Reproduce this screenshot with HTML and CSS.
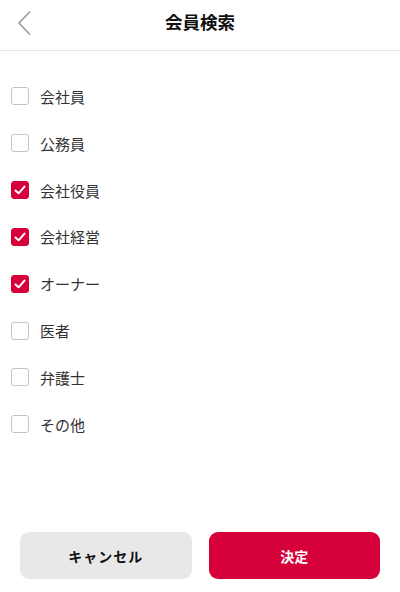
FILE: index.html
```html
<!DOCTYPE html>
<html lang="ja">
<head>
<meta charset="utf-8">
<link rel="stylesheet" href="styles.css">
</head>
<body>
<div class="page">
  <header class="header">
    <span class="back">
      <svg width="16" height="26" viewBox="0 0 16 26"><path d="M14 1.5 L3 13 L14 24.5" fill="none" stroke="#9a9a9a" stroke-width="1.6"/></svg>
    </span>
    <h1 class="title">会員検索</h1>
  </header>
  <ul class="list">
    <li class="item"><span class="box"></span><span class="label">会社員</span></li>
    <li class="item"><span class="box"></span><span class="label">公務員</span></li>
    <li class="item"><span class="box checked"><svg width="18" height="18" viewBox="0 0 18 18"><path d="M4.5 9.5 L7.6 12.3 L13.5 5.6" fill="none" stroke="#fff" stroke-width="2" stroke-linecap="round" stroke-linejoin="round"/></svg></span><span class="label">会社役員</span></li>
    <li class="item"><span class="box checked"><svg width="18" height="18" viewBox="0 0 18 18"><path d="M4.5 9.5 L7.6 12.3 L13.5 5.6" fill="none" stroke="#fff" stroke-width="2" stroke-linecap="round" stroke-linejoin="round"/></svg></span><span class="label">会社経営</span></li>
    <li class="item"><span class="box checked"><svg width="18" height="18" viewBox="0 0 18 18"><path d="M4.5 9.5 L7.6 12.3 L13.5 5.6" fill="none" stroke="#fff" stroke-width="2" stroke-linecap="round" stroke-linejoin="round"/></svg></span><span class="label">オーナー</span></li>
    <li class="item"><span class="box"></span><span class="label">医者</span></li>
    <li class="item"><span class="box"></span><span class="label">弁護士</span></li>
    <li class="item"><span class="box"></span><span class="label">その他</span></li>
  </ul>
  <footer class="footer">
    <button class="btn cancel">キャンセル</button>
    <button class="btn ok">決定</button>
  </footer>
</div>
</body>
</html>
```

FILE: styles.css
```css
* { box-sizing: border-box; }
html, body { margin: 0; padding: 0; background: #fff; }
body { font-family: "Noto Sans CJK JP", "Noto Sans", sans-serif; color: #333; }
.page { height: 592px; display: flex; flex-direction: column; }
.header {
  height: 51px;
  border-bottom: 1px solid #e6e6e6;
  display: flex;
  align-items: center;
  justify-content: center;
  position: relative;
}
.back { position: absolute; left: 16px; top: 10px; display: flex; }
.title { margin: 0; font-size: 17.5px; font-weight: 700; color: #111; line-height: 1; margin-top: -6px; }
.list { list-style: none; margin: 0; padding: 22px 0 0 0; flex: 1; }
.item { height: 46.85px; display: flex; align-items: center; padding-left: 11px; }
.box {
  width: 18px; height: 18px;
  border: 1.5px solid #c4c4c4;
  border-radius: 3px;
  display: flex; align-items: center; justify-content: center;
  flex-shrink: 0;
}
.box.checked { background: #d6003a; border-color: #d6003a; }
.box.checked svg { flex-shrink: 0; }
.label { margin-left: 11px; font-size: 15px; color: #333; }
.footer { display: flex; gap: 17px; padding: 0 20px 13px 20px; }
.btn {
  flex: 1; height: 47px; border: none; border-radius: 9px;
  font-family: "Noto Sans CJK JP", "Noto Sans", sans-serif;
  font-size: 14px; font-weight: 700;
}
.cancel { background: #e8e8e8; color: #111; letter-spacing: 1px; }
.ok { background: #d6003a; color: #fff; }
```
